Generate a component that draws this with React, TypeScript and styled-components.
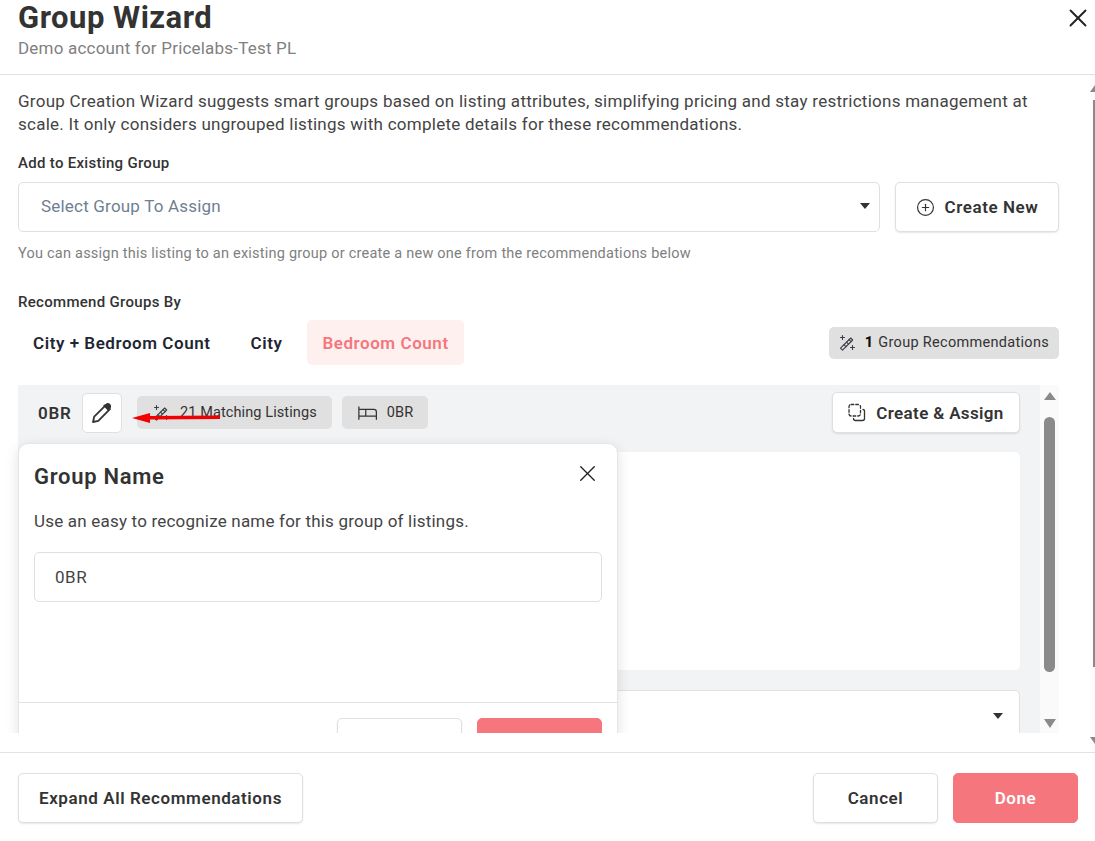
import React from 'react';
import styled, { createGlobalStyle } from 'styled-components';
import { CirclePlus, X } from 'lucide-react';
import { PiBed } from 'react-icons/pi';

const GlobalStyle = createGlobalStyle`
  html, body {
    margin: 0;
    padding: 0;
    background: #fff;
  }
  * {
    box-sizing: border-box;
  }
  body {
    font-family: Roboto, "Liberation Sans", sans-serif;
    color: #333;
  }
`;

const WandIcon = () => (
  <svg width="18" height="18" viewBox="0 0 18 18" fill="none" stroke="#3a3f45" strokeWidth="1.1" strokeLinecap="round" strokeLinejoin="round">
    <path d="M2.500 14.200 12.700 4l2 2L4.500 16.200z" />
    <path d="M6 10.700l2 2M8.500 8.200l2 2M11 5.700l2 2" />
    <path d="M4.500 1.500v4M2.500 3.500h4M14.500 11.500v4M12.500 13.500h4" />
  </svg>
);

const PencilIcon = () => (
  <svg width="24" height="24" viewBox="0 0 20 20" fill="none" stroke="#333" strokeWidth="1.5" strokeLinejoin="round">
    <path d="M2.500 17.500l1-4.400L13.200 3.400l3.400 3.400-9.700 9.700z" />
    <path d="M13.200 3.400c1-1 2-1.400 3-.4s.6 2.300-.1 3.200l-.9.9-3.300-3.300z" fill="#333" />
  </svg>
);

const CopyDashedIcon = () => (
  <svg width="18" height="19" viewBox="0 0 18 19" fill="none" stroke="#333" strokeWidth="1.300" strokeLinecap="round">
    <rect x="1" y="1.500" width="11.500" height="11.500" rx="2.200" strokeDasharray="2.600 2" />
    <path d="M15 6.500a1.500 1.500 0 0 1 1.500 1.500v7.500a2 2 0 0 1-2 2H7.500a2 2 0 0 1-2-2" />
  </svg>
);

const Caret = styled.span`
  width: 0;
  height: 0;
  border-left: 5.5px solid transparent;
  border-right: 5.5px solid transparent;
  border-top: 6px solid #333;
`;

const Page = styled.div`
  width: 1095px;
  height: 841px;
  display: flex;
  flex-direction: column;
  overflow: hidden;
  background: #fff;
`;

const Header = styled.header`
  height: 75px;
  flex: none;
  padding: 0 18px;
  border-bottom: 1px solid #e2e2e2;
  display: flex;
  justify-content: space-between;
`;

const Title = styled.h1`
  margin: 0;
  font-size: 31px;
  line-height: 36px;
  font-weight: 700;
  letter-spacing: 0.5px;
  color: #333;
`;

const Subtitle = styled.div`
  font-size: 17px;
  line-height: 24px;
  letter-spacing: 0.2px;
  color: #808080;
`;

const CloseButton = styled.div`
  display: flex;
  margin: 3px -16px 0 0;
  height: 30px;
  color: #222;
`;

const Main = styled.div`
  position: relative;
  height: 677px;
  flex: none;
`;

const Body = styled.main`
  position: relative;
  height: 658px;
  overflow: hidden;
  padding: 15px 36px 0 18px;
`;

const Intro = styled.p`
  margin: 0 0 17px;
  font-size: 17px;
  line-height: 23px;
  letter-spacing: 0.26px;
  color: #444;
`;

const FieldLabel = styled.div`
  font-size: 15px;
  line-height: 20px;
  font-weight: 500;
  letter-spacing: 0.3px;
  color: #333;
`;

const AssignRow = styled.div`
  display: flex;
  gap: 15px;
  margin-top: 9px;
`;

const Select = styled.div`
  flex: 1;
  height: 50px;
  border: 1px solid #e0e0e0;
  border-radius: 5px;
  padding: 0 9px 2px 22px;
  display: flex;
  align-items: center;
  justify-content: space-between;
  font-size: 17px;
  letter-spacing: 0.2px;
  color: #6f7f92;
`;

const Button = styled.div<{ $width?: number; $primary?: boolean }>`
  width: ${(p) => (p.$width ? `${p.$width}px` : 'auto')};
  height: 50px;
  padding: 0 20px;
  flex: none;
  display: flex;
  align-items: center;
  justify-content: center;
  gap: 10px;
  white-space: nowrap;
  border-radius: 5px;
  border: 1px solid ${(p) => (p.$primary ? '#f5767c' : '#e0e0e0')};
  background: ${(p) => (p.$primary ? '#f5767c' : '#fff')};
  color: ${(p) => (p.$primary ? '#fff' : '#333')};
  font-size: 17px;
  font-weight: 600;
  letter-spacing: 0.58px;
  box-shadow: ${(p) => (p.$primary ? 'none' : '0 1px 2px rgba(0, 0, 0, 0.1)')};

  svg {
    flex: none;
  }
`;

const AssignButton = styled(Button)`
  height: 41px;
  padding: 0;
  letter-spacing: 0.35px;
`;

const Hint = styled.div`
  margin-top: 12px;
  font-size: 14.5px;
  line-height: 20px;
  letter-spacing: 0.23px;
  color: #808080;
`;

const RecommendLabel = styled(FieldLabel)`
  margin-top: 28px;
`;

const TabsRow = styled.div`
  display: flex;
  align-items: center;
  justify-content: space-between;
  margin-top: 8px;
`;

const Tabs = styled.div`
  display: flex;
`;

const Tab = styled.div<{ $active?: boolean }>`
  height: 45px;
  padding: 0 15px;
  margin-right: ${(p) => (p.$active ? 0 : '10px')};
  display: flex;
  align-items: center;
  border-radius: 5px;
  font-size: 17px;
  font-weight: 600;
  letter-spacing: 0.55px;
  color: ${(p) => (p.$active ? '#f5767c' : '#1f2733')};
  background: ${(p) => (p.$active ? '#fff0f0' : 'transparent')};
`;

const Chip = styled.div`
  height: 33px;
  padding: 0 15px;
  display: flex;
  align-items: center;
  gap: 10px;
  border-radius: 5px;
  background: #e0e0e0;
  font-size: 14.5px;
  color: #333;
  letter-spacing: 0.1px;
`;

const CountChip = styled(Chip)`
  height: 32px;
  padding: 0 10px 0 9px;
  gap: 9px;
  letter-spacing: 0.3px;

  b {
    font-weight: 800;
    color: #111;
    margin-right: -4px;
  }
`;

const Recommendations = styled.section`
  display: flex;
  margin-top: 20px;
  height: 348px;
`;

const List = styled.div`
  flex: 1;
  background: #f2f3f5;
  padding: 7px 20px 0;
`;

const GroupHeader = styled.div`
  display: flex;
  align-items: center;
  height: 41px;
`;

const GroupTitle = styled.div`
  font-size: 17px;
  font-weight: 600;
  letter-spacing: 0.8px;
  color: #333;
  width: 44px;
`;

const IconButton = styled.div`
  width: 40px;
  height: 40px;
  display: flex;
  align-items: center;
  justify-content: center;
  background: #fff;
  border: 1px solid #e0e0e0;
  border-radius: 5px;
  margin-right: 15px;
`;

const HeaderChips = styled.div`
  flex: 1;
  display: flex;
  gap: 10px;
`;

const GroupCard = styled.div`
  height: 218px;
  margin-top: 19px;
  border-radius: 5px;
  background: #fff;
`;

const CollapsedCard = styled.div`
  height: 60px;
  margin-top: 20px;
  border: 1px solid #e0e0e0;
  border-radius: 5px;
  background: #fff;
  padding: 22px 16px 0 0;
  display: flex;
  justify-content: flex-end;
`;

const ScrollTrack = styled.div`
  width: 19px;
  flex: none;
  background: #fafafa;
  display: flex;
  flex-direction: column;
  align-items: center;
`;

const ArrowUp = styled.span`
  margin-top: 7px;
  width: 0;
  height: 0;
  border-left: 6px solid transparent;
  border-right: 6px solid transparent;
  border-bottom: 8px solid #8a8a8a;
`;

const ArrowDown = styled.span`
  margin-top: 47px;
  width: 0;
  height: 0;
  border-left: 6px solid transparent;
  border-right: 6px solid transparent;
  border-top: 9px solid #8a8a8a;
`;

const Thumb = styled.div`
  width: 11px;
  height: 255px;
  margin-top: 17px;
  border-radius: 6px;
  background: #8a8a8a;
`;

const OuterTrack = styled.div`
  position: absolute;
  top: 0;
  right: 0;
  bottom: 0;
  width: 5px;
  background: #fcfcfc;
  display: flex;
  flex-direction: column;
  align-items: flex-start;
`;

const OuterArrowUp = styled(ArrowUp)`
  flex: none;
  margin-top: 10px;
  border-left-width: 5px;
  border-right-width: 5px;
  border-bottom-width: 7px;
`;

const OuterThumb = styled.div`
  flex: none;
  width: 2px;
  height: 567px;
  margin: 8px 0 0 3px;
  background: #8a8a8a;
`;

const OuterArrowDown = styled(ArrowDown)`
  flex: none;
  margin-top: 70px;
  border-left-width: 5px;
  border-right-width: 5px;
  border-top-width: 7px;
`;

const Popover = styled.div`
  position: absolute;
  left: 18px;
  top: 368px;
  width: 600px;
  height: 342px;
  background: #fff;
  border: 1px solid #e6e6e6;
  border-radius: 10px;
  box-shadow: 0 4px 14px rgba(0, 0, 0, 0.12);
`;

const PopoverHead = styled.div`
  display: flex;
  justify-content: space-between;
  padding: 19px 16px 0 15px;
`;

const PopoverTitle = styled.div`
  font-size: 22px;
  line-height: 28px;
  font-weight: 600;
  letter-spacing: 0.7px;
  color: #333;
`;

const PopoverClose = styled.div`
  display: flex;
  height: 27px;
  margin-top: -3px;
  color: #222;
`;

const PopoverText = styled.div`
  margin: 18px 15px 0;
  font-size: 17px;
  line-height: 24px;
  letter-spacing: 0.2px;
  color: #444;
`;

const NameInput = styled.div`
  height: 50px;
  margin: 19px 15px 0;
  padding: 0 20px;
  border: 1px solid #e0e0e0;
  border-radius: 5px;
  display: flex;
  align-items: center;
  font-size: 17px;
  letter-spacing: 0.5px;
  color: #444;
`;

const PopoverFooter = styled.div`
  margin-top: 100px;
  padding: 15px 15px 0;
  border-top: 1px solid #e2e2e2;
  display: flex;
  justify-content: flex-end;
  gap: 15px;
`;

const RedArrow = styled.svg`
  position: absolute;
  left: 130px;
  top: 333px;
`;

const Footer = styled.footer`
  flex: 1;
  padding: 20px 17px 0 18px;
  border-top: 1px solid #e2e2e2;
  display: flex;
  justify-content: space-between;
`;

const FooterActions = styled.div`
  display: flex;
  gap: 15px;
`;

export default function App() {
  return (
    <Page>
      <GlobalStyle />
      <Header>
        <div>
          <Title>Group Wizard</Title>
          <Subtitle>Demo account for Pricelabs-Test PL</Subtitle>
        </div>
        <CloseButton><X size={30} strokeWidth={1.5} /></CloseButton>
      </Header>
      <Main>
        <Body>
          <Intro>
            Group Creation Wizard suggests smart groups based on listing attributes, simplifying pricing and stay restrictions management at scale. It only considers ungrouped listings with complete details for these recommendations.
          </Intro>
          <FieldLabel>Add to Existing Group</FieldLabel>
          <AssignRow>
            <Select>
              Select Group To Assign
              <Caret />
            </Select>
            <Button $width={164}>
              <CirclePlus size={19} strokeWidth={1.5} />
              Create New
            </Button>
          </AssignRow>
          <Hint>You can assign this listing to an existing group or create a new one from the recommendations below</Hint>
          <RecommendLabel>Recommend Groups By</RecommendLabel>
          <TabsRow>
            <Tabs>
              <Tab>City + Bedroom Count</Tab>
              <Tab>City</Tab>
              <Tab $active>Bedroom Count</Tab>
            </Tabs>
            <CountChip>
              <WandIcon />
              <b>1</b> Group Recommendations
            </CountChip>
          </TabsRow>
          <Recommendations>
            <List>
              <GroupHeader>
                <GroupTitle>0BR</GroupTitle>
                <IconButton><PencilIcon /></IconButton>
                <HeaderChips>
                  <Chip><WandIcon /> 21 Matching Listings</Chip>
                  <Chip><PiBed size={20} /> 0BR</Chip>
                </HeaderChips>
                <AssignButton $width={188}>
                  <CopyDashedIcon />
                  Create &amp; Assign
                </AssignButton>
              </GroupHeader>
              <GroupCard />
              <CollapsedCard><Caret /></CollapsedCard>
            </List>
            <ScrollTrack>
              <ArrowUp />
              <Thumb />
              <ArrowDown />
            </ScrollTrack>
          </Recommendations>
          <Popover>
            <PopoverHead>
              <PopoverTitle>Group Name</PopoverTitle>
              <PopoverClose><X size={27} strokeWidth={1.2} /></PopoverClose>
            </PopoverHead>
            <PopoverText>Use an easy to recognize name for this group of listings.</PopoverText>
            <NameInput>0BR</NameInput>
            <PopoverFooter>
              <Button $width={125} />
              <Button $width={125} $primary />
            </PopoverFooter>
          </Popover>
          <RedArrow width="92" height="20" viewBox="0 0 92 20">
            <path d="M2 10 20 5v3l70-.5V11l-70 .5V15z" fill="#f00000" />
          </RedArrow>
        </Body>
        <OuterTrack>
          <OuterArrowUp />
          <OuterThumb />
          <OuterArrowDown />
        </OuterTrack>
      </Main>
      <Footer>
        <Button>Expand All Recommendations</Button>
        <FooterActions>
          <Button $width={125}>Cancel</Button>
          <Button $width={125} $primary>Done</Button>
        </FooterActions>
      </Footer>
    </Page>
  );
}
